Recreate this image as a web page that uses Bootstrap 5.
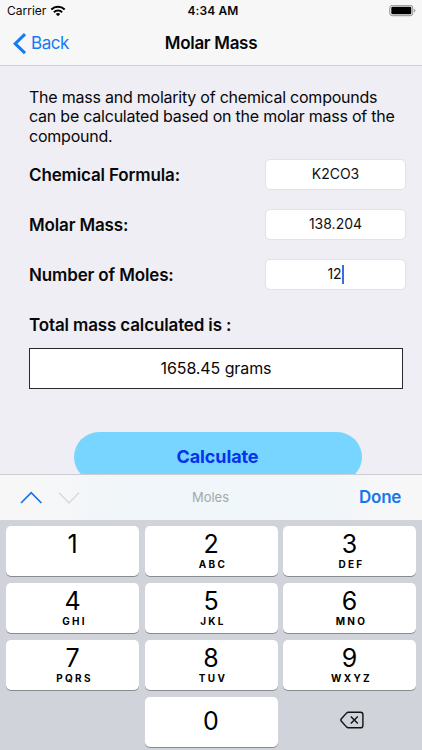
<!DOCTYPE html>
<html lang="en">
<head>
<meta charset="utf-8">
<meta name="viewport" content="width=device-width, initial-scale=1">
<title>Molar Mass</title>
<link href="https://cdn.jsdelivr.net/npm/bootstrap@5.3.0/dist/css/bootstrap.min.css" rel="stylesheet">
<style>
body{font-family:Inter,"Liberation Sans",sans-serif;background:#efeef4;color:#08080a;height:750px}
.app-top{height:66px;background:#f7f7f8;border-bottom:1px solid #cfced5}
.status-bar{height:22px;font-size:12px;line-height:22px;display:grid;grid-template-columns:1fr auto 1fr;padding:0 6px 0 7px}
.carrier-name{letter-spacing:0}
.clock{font-weight:600;letter-spacing:.1px;padding-left:3px}
.title-bar{height:43px;display:grid;grid-template-columns:1fr auto 1fr;padding:0 13px}
.title-bar h1{font-size:17px;font-weight:600;letter-spacing:-.3px;line-height:43px}
.back-link{color:#147bf2;font-size:17px;letter-spacing:-.45px}
.content{height:408px;padding:22px 16px 0 29px}
.intro{font-size:16px;line-height:19.3px;letter-spacing:-.23px;height:61px}
.form-line{height:50px}
.form-line label,.total-label{font-size:17px;font-weight:600;letter-spacing:-.14px;line-height:20px}
.form-line label{padding-top:2px}
.form-line .form-control{width:141px;height:31px;padding:0;border:1px solid #e2e1e7;border-radius:5px;font-size:14px;line-height:28px;color:#111}
.caret{width:2px;height:19px;background:#4068e8}
.total-label{padding-top:16px}
.result{width:374px;height:41px;margin-top:12.5px;border:1.5px solid #29292e;font-size:16px;letter-spacing:-.1px}
.calc-btn{width:288px;height:50px;margin:43.5px 0 0 44.5px;background:#78d5ff;color:#0433ee;font-size:18px;font-weight:700;letter-spacing:-.1px;line-height:48px}
.calc-btn:hover{background:#78d5ff;color:#0433ee}
.assist{height:46px;background:linear-gradient(90deg,#f7f7f8 8%,#f0f6f9 32%,#f0f6f9 72%,#f7f7f8 95%);border-top:1px solid #cbcdd2;padding:0 21px 0 20px;display:grid;grid-template-columns:1fr auto 1fr}
.hint{font-size:13px;color:#a5a8ab}
.done{color:#1678e8;font-size:17px;font-weight:600;letter-spacing:-.3px}
.keypad{height:230px;background:#d0d3da;padding:6px 6px 0;display:grid;grid-template-columns:repeat(3,133px);grid-template-rows:repeat(4,50px);column-gap:5.5px;row-gap:7px}
.key{background:#fff;border-radius:5px;box-shadow:0 1px 0 #898b8f;color:#000}
.digit{font-size:25px;line-height:28px;height:27px;margin-top:4px}
.letters{font-size:10px;font-weight:700;letter-spacing:2.3px;line-height:12px;margin-right:-4px;margin-top:1px}
</style>
<script src="https://cdn.jsdelivr.net/npm/bootstrap@5.3.0/dist/js/bootstrap.bundle.min.js"></script>
</head>
<body class="overflow-hidden">
<header class="app-top">
  <div class="status-bar">
    <div class="d-flex align-items-center"><span class="carrier-name">Carrier</span>
      <svg class="ms-1" width="16" height="12" viewBox="0 0 16 12"><g fill="none" stroke="#000" stroke-width="2"><path d="M1.3 4.5a9.6 9.6 0 0 1 13.4 0"/><path d="M3.9 7.2a5.9 5.9 0 0 1 8.2 0"/></g><path d="M5.8 9a3.2 3.2 0 0 1 4.4 0L8 11.3z"/></svg>
    </div>
    <div class="clock">4:34 AM</div>
    <div class="d-flex align-items-center justify-content-end pb-1">
      <svg class="mt-1" width="27" height="12" viewBox="0 0 27 12"><rect x=".8" y=".3" width="23" height="10.4" rx="2.6" fill="none" stroke="#8d8d8d"/><rect x="2.3" y="1.8" width="20" height="7.4" rx="1.2"/><path d="M25.2 3.7c1.6.5 1.6 3.1 0 3.6z" fill="#8d8d8d"/></svg>
    </div>
  </div>
  <nav class="title-bar">
    <a href="#" class="back-link d-flex align-items-center text-decoration-none"><svg class="me-1" width="14" height="22" viewBox="0 0 14 22"><path d="M12 1.2 2.2 10.7 12 20.2" fill="none" stroke="#147bf2" stroke-width="3"/></svg>Back</a>
    <h1 class="m-0">Molar Mass</h1>
  </nav>
</header>
<main class="content overflow-hidden">
  <p class="intro mb-0">The mass and molarity of chemical compounds<br>can be calculated based on the molar mass of the<br>compound.</p>
  <form>
    <div class="form-line d-flex align-items-center justify-content-between">
      <label>Chemical Formula:</label><div class="form-control d-flex align-items-center justify-content-center">K2CO3</div>
    </div>
    <div class="form-line d-flex align-items-center justify-content-between">
      <label>Molar Mass:</label><div class="form-control d-flex align-items-center justify-content-center">138.204</div>
    </div>
    <div class="form-line d-flex align-items-center justify-content-between">
      <label>Number of Moles:</label><div class="form-control d-flex align-items-center justify-content-center">12<span class="caret"></span></div>
    </div>
    <div class="total-label">Total mass calculated is :</div>
    <div class="result bg-white d-flex align-items-center justify-content-center">1658.45 grams</div>
    <button type="button" class="calc-btn btn border-0 rounded-pill p-0 d-block">Calculate</button>
  </form>
</main>
<section>
  <div class="assist align-items-center">
    <div class="d-flex align-items-center">
      <svg width="60" height="14" viewBox="0 0 60 14" fill="none" stroke-width="1.7"><path d="M1 12 11.2 1.7 21.4 12" stroke="#1673e6"/><path d="M39 1.7 49 12 59 1.7" stroke="#d7dadd" stroke-width="1.4"/></svg>
    </div>
    <div class="hint">Moles</div>
    <div class="done text-end">Done</div>
  </div>
  <div class="keypad text-center">
    <div class="key"><div class="digit">1</div></div>
    <div class="key"><div class="digit">2</div><div class="letters">ABC</div></div>
    <div class="key"><div class="digit">3</div><div class="letters">DEF</div></div>
    <div class="key"><div class="digit">4</div><div class="letters">GHI</div></div>
    <div class="key"><div class="digit">5</div><div class="letters">JKL</div></div>
    <div class="key"><div class="digit">6</div><div class="letters">MNO</div></div>
    <div class="key"><div class="digit">7</div><div class="letters">PQRS</div></div>
    <div class="key"><div class="digit">8</div><div class="letters">TUV</div></div>
    <div class="key"><div class="digit">9</div><div class="letters">WXYZ</div></div>
    <div></div>
    <div class="key d-flex align-items-center justify-content-center pb-1"><div class="digit m-0">0</div></div>
    <div class="d-flex align-items-center justify-content-center ps-1 pb-1">
      <svg width="24" height="18" viewBox="0 0 24 18" fill="none" stroke="#111" stroke-width="1.4"><path d="M8.3 1.2H20.5a2.4 2.4 0 0 1 2.4 2.4v10.8a2.4 2.4 0 0 1-2.4 2.4H8.3Q7.4 16.8 6.7 16.1L1.2 10Q.5 9 1.2 8L6.7 1.9Q7.4 1.2 8.3 1.2z"/><path d="M10.8 5.5l7 7M17.8 5.5l-7 7"/></svg>
    </div>
  </div>
</section>
</body>
</html>
